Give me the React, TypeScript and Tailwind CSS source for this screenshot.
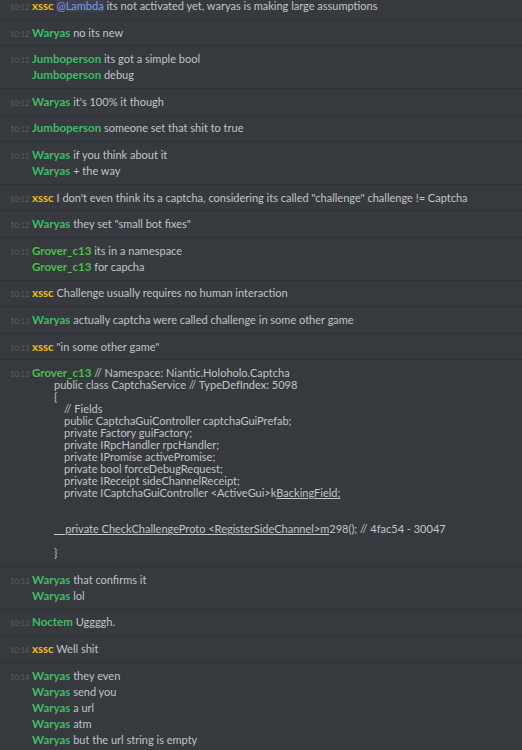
import React from 'react';

type Msg = { name: string; color: string; text: React.ReactNode };
type Group = { time: string; msgs: Msg[] };

const GREEN = 'text-[#3fbd66]';
const GROVER = 'text-[#4dbd4a]';
const YELLOW = 'text-[#efb923]';

const codeText = (
  <>
    {'// Namespace: Niantic.Holoholo.Captcha\npublic class CaptchaService // TypeDefIndex: 5098\n{\n\t// Fields\n\tpublic CaptchaGuiController captchaGuiPrefab;\n\tprivate Factory guiFactory;\n\tprivate IRpcHandler rpcHandler;\n\tprivate IPromise activePromise;\n\tprivate bool forceDebugRequest;\n\tprivate IReceipt sideChannelReceipt;\n\tprivate ICaptchaGuiController <ActiveGui>k'}
    <span className="underline">{'BackingField;\n\n\n    private CheckChallengeProto <RegisterSideChannel>m'}</span>
    {'298(); // 4fac54 - 30047\n\n}'}
  </>
);

const groups: Group[] = [
  {
    time: '10:12',
    msgs: [
      {
        name: 'xssc',
        color: YELLOW,
        text: (
          <>
            <span className="text-[#7f97e8] bg-[#7289da]/10">@Lambda</span> its not activated yet, waryas is making large assumptions
          </>
        ),
      },
    ],
  },
  { time: '10:12', msgs: [{ name: 'Waryas', color: GREEN, text: 'no its new' }] },
  {
    time: '10:12',
    msgs: [
      { name: 'Jumboperson', color: GREEN, text: 'its got a simple bool' },
      { name: 'Jumboperson', color: GREEN, text: 'debug' },
    ],
  },
  { time: '10:12', msgs: [{ name: 'Waryas', color: GREEN, text: "it's 100% it though" }] },
  { time: '10:12', msgs: [{ name: 'Jumboperson', color: GREEN, text: 'someone set that shit to true' }] },
  {
    time: '10:12',
    msgs: [
      { name: 'Waryas', color: GREEN, text: 'if you think about it' },
      { name: 'Waryas', color: GREEN, text: '+ the way' },
    ],
  },
  {
    time: '10:12',
    msgs: [
      {
        name: 'xssc',
        color: YELLOW,
        text: 'I don\'t even think its a captcha, considering its called "challenge" challenge != Captcha',
      },
    ],
  },
  { time: '10:12', msgs: [{ name: 'Waryas', color: GREEN, text: 'they set "small bot fixes"' }] },
  {
    time: '10:12',
    msgs: [
      { name: 'Grover_c13', color: GROVER, text: 'its in a namespace' },
      { name: 'Grover_c13', color: GROVER, text: 'for capcha' },
    ],
  },
  { time: '10:12', msgs: [{ name: 'xssc', color: YELLOW, text: 'Challenge usually requires no human interaction' }] },
  {
    time: '10:13',
    msgs: [{ name: 'Waryas', color: GREEN, text: 'actually captcha were called challenge in some other game' }],
  },
  { time: '10:13', msgs: [{ name: 'xssc', color: YELLOW, text: '"in some other game"' }] },
  { time: '10:13', msgs: [{ name: 'Grover_c13', color: GROVER, text: codeText }] },
  {
    time: '10:13',
    msgs: [
      { name: 'Waryas', color: GREEN, text: 'that confirms it' },
      { name: 'Waryas', color: GREEN, text: 'lol' },
    ],
  },
  { time: '10:13', msgs: [{ name: 'Noctem', color: GREEN, text: 'Uggggh.' }] },
  { time: '10:14', msgs: [{ name: 'xssc', color: YELLOW, text: 'Well shit' }] },
  {
    time: '10:14',
    msgs: [
      { name: 'Waryas', color: GREEN, text: 'they even' },
      { name: 'Waryas', color: GREEN, text: 'send you' },
      { name: 'Waryas', color: GREEN, text: 'a url' },
      { name: 'Waryas', color: GREEN, text: 'atm' },
      { name: 'Waryas', color: GREEN, text: 'but the url string is empty' },
    ],
  },
];

const MessageGroup = ({ group }: { group: Group }) => (
  <div className="py-[4.8px] border-b border-[#2e3135]">
    {group.msgs.map((m, i) => (
      <div key={i} className="flex items-baseline py-[2px]">
        <div className="w-[32px] shrink-0 pl-[10px] text-[7.5px] leading-none text-[#5d6065]">{i === 0 ? group.time : ''}</div>
        <div className="flex-1 min-w-0 pl-[22px] -indent-[22px] whitespace-pre-wrap [tab-size:10px] leading-[12px] text-[11px] text-[#c3c4c5]">
          <span className={`font-bold text-[11.5px] ${m.color}`}>{m.name}</span> {m.text}
        </div>
      </div>
    ))}
  </div>
);

export default function App() {
  return (
    <div
      className="w-[522px] h-[750px] overflow-hidden bg-[#36393e]"
      style={{ fontFamily: 'Lato, "Open Sans", sans-serif' }}
    >
      <div className="-mt-[6.8px]">
        {groups.map((g, i) => (
          <MessageGroup key={i} group={g} />
        ))}
      </div>
    </div>
  );
}
